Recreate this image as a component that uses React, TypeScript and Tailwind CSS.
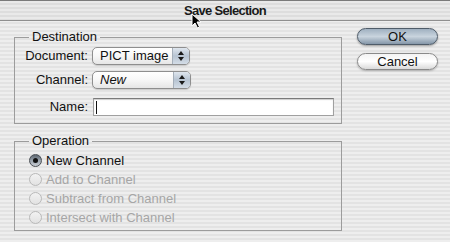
const stripes =
  'bg-[repeating-linear-gradient(180deg,#eeeeee_0px,#eeeeee_2px,#e3e3e3_2px,#e3e3e3_4px)]'

const Popup = ({ value, italic, width }: { value: string; italic?: boolean; width: string }) => {
  return (
    <div
      className={`${width} h-[18px] flex items-stretch rounded-[5px] border border-[#8e8e8e] bg-gradient-to-b from-white via-[#f7f7f7] to-[#e6e6e6] shadow-[0_1px_1px_rgba(0,0,0,0.15)] overflow-hidden`}
    >
      <span className={`flex-1 pl-[7px] text-[13px] leading-[16px] text-[#111] ${italic ? 'italic' : ''}`}>{value}</span>
      <span className="w-[17px] flex flex-col items-center justify-center gap-[2px] bg-gradient-to-b from-[#dfe6ee] via-[#b7c4d2] to-[#d4dde7] border-l border-[#a5afba]">
        <svg width="6" height="4" viewBox="0 0 6 4">
          <path d="M0 4 L3 0 L6 4 Z" fill="#1a1a1a" />
        </svg>
        <svg width="6" height="4" viewBox="0 0 6 4">
          <path d="M0 0 L3 4 L6 0 Z" fill="#1a1a1a" />
        </svg>
      </span>
    </div>
  )
}

const options = [
  { label: 'New Channel', checked: true, disabled: false },
  { label: 'Add to Channel', checked: false, disabled: true },
  { label: 'Subtract from Channel', checked: false, disabled: true },
  { label: 'Intersect with Channel', checked: false, disabled: true },
]

const Radio = ({ checked }: { checked: boolean }) => {
  if (checked) {
    return (
      <span className="w-[13px] h-[13px] rounded-full flex items-center justify-center bg-gradient-to-b from-[#5c6670] via-[#9aa3ad] to-[#c9ced4] border border-[#4a4f55]">
        <span className="w-[5px] h-[5px] rounded-full bg-[#111]" />
      </span>
    )
  }
  return <span className="w-[13px] h-[13px] rounded-full border border-[#b9b9b9] bg-gradient-to-b from-[#f2f2f2] to-[#e2e2e2]" />
}

export default function App() {
  return (
    <div
      className={`relative w-[450px] h-[242px] overflow-hidden ${stripes} font-['Liberation_Sans',Arial,sans-serif] text-[#111]`}
    >
      {/* title bar */}
      <div className="h-[21px] border-t border-[#7a7a7a] border-b border-b-[#8f8f8f] bg-[repeating-linear-gradient(180deg,#e9e9e9_0px,#e9e9e9_2px,#dddddd_2px,#dddddd_4px)] flex items-center justify-center">
        <span className="text-[13px] font-bold tracking-[-0.7px] leading-[15px] text-[#1a1a1a]">Save Selection</span>
      </div>

      <div className="flex pt-[8px]">
        <div className="ml-[14px] w-[328px] flex flex-col">
          <fieldset className="m-0 border border-[#9c9c9c] px-0 pt-[2px] pb-[7px]">
            <legend className="ml-[14px] px-[3px] text-[13px] leading-[16px]">Destination</legend>
            <div className="grid grid-cols-[73px_1fr] gap-x-[4px] items-center pr-[7px]">
              <span className="text-right text-[13px] leading-[16px]">Document:</span>
              <Popup value="PICT image" width="w-[98px]" />
              <span className="mt-[6px] text-right text-[13px] leading-[16px]">Channel:</span>
              <div className="mt-[6px]">
                <Popup value="New" italic width="w-[99px]" />
              </div>
              <span className="mt-[9px] text-right text-[13px] leading-[16px]">Name:</span>
              <div className="mt-[9px] ml-[1px] h-[18px] border border-[#a0a0a0] border-t-[#7a7a7a] bg-white shadow-[inset_0_1px_1px_rgba(0,0,0,0.2)] flex items-center pl-[2px]">
                <span className="w-[1px] h-[13px] bg-[#111]" />
              </div>
            </div>
          </fieldset>

          <fieldset className="mt-[9px] m-0 border border-[#9c9c9c] pl-[14px] pr-0 pt-[2px] pb-[3px]">
            <legend className="px-[3px] text-[13px] leading-[16px]">Operation</legend>
            <div className="flex flex-col">
              {options.map((o) => (
                <div key={o.label} className="h-[19px] flex items-center gap-[4px]">
                  <Radio checked={o.checked} />
                  <span className={`text-[13px] leading-[16px] ${o.disabled ? 'text-[#a6a6a6]' : 'text-[#111]'}`}>{o.label}</span>
                </div>
              ))}
            </div>
          </fieldset>
        </div>

        <div className="ml-[15px] -mt-[1px] w-[81px] flex flex-col gap-[8px]">
          <button className="h-[17px] rounded-full border border-[#4f5c69] bg-gradient-to-b from-[#9fb0c0] via-[#c9d4de] to-[#8597a9] shadow-[0_1px_2px_rgba(0,0,0,0.35)] text-[13px] leading-[15px] text-[#111]">
            OK
          </button>
          <button className="h-[17px] rounded-full border border-[#8a8a8a] bg-gradient-to-b from-[#f4f4f4] via-white to-[#dadada] shadow-[0_1px_2px_rgba(0,0,0,0.25)] text-[13px] leading-[15px] text-[#111]">
            Cancel
          </button>
        </div>
      </div>

      {/* mouse pointer over the title */}
      <svg className="absolute left-[191px] top-[13px]" width="11" height="16" viewBox="0 0 11 16">
        <path d="M1 1 L1 13 L4 10 L6.5 15 L8.5 14 L6 9 L10 9 Z" fill="#000" stroke="#fff" strokeWidth="1" />
      </svg>
    </div>
  )
}
